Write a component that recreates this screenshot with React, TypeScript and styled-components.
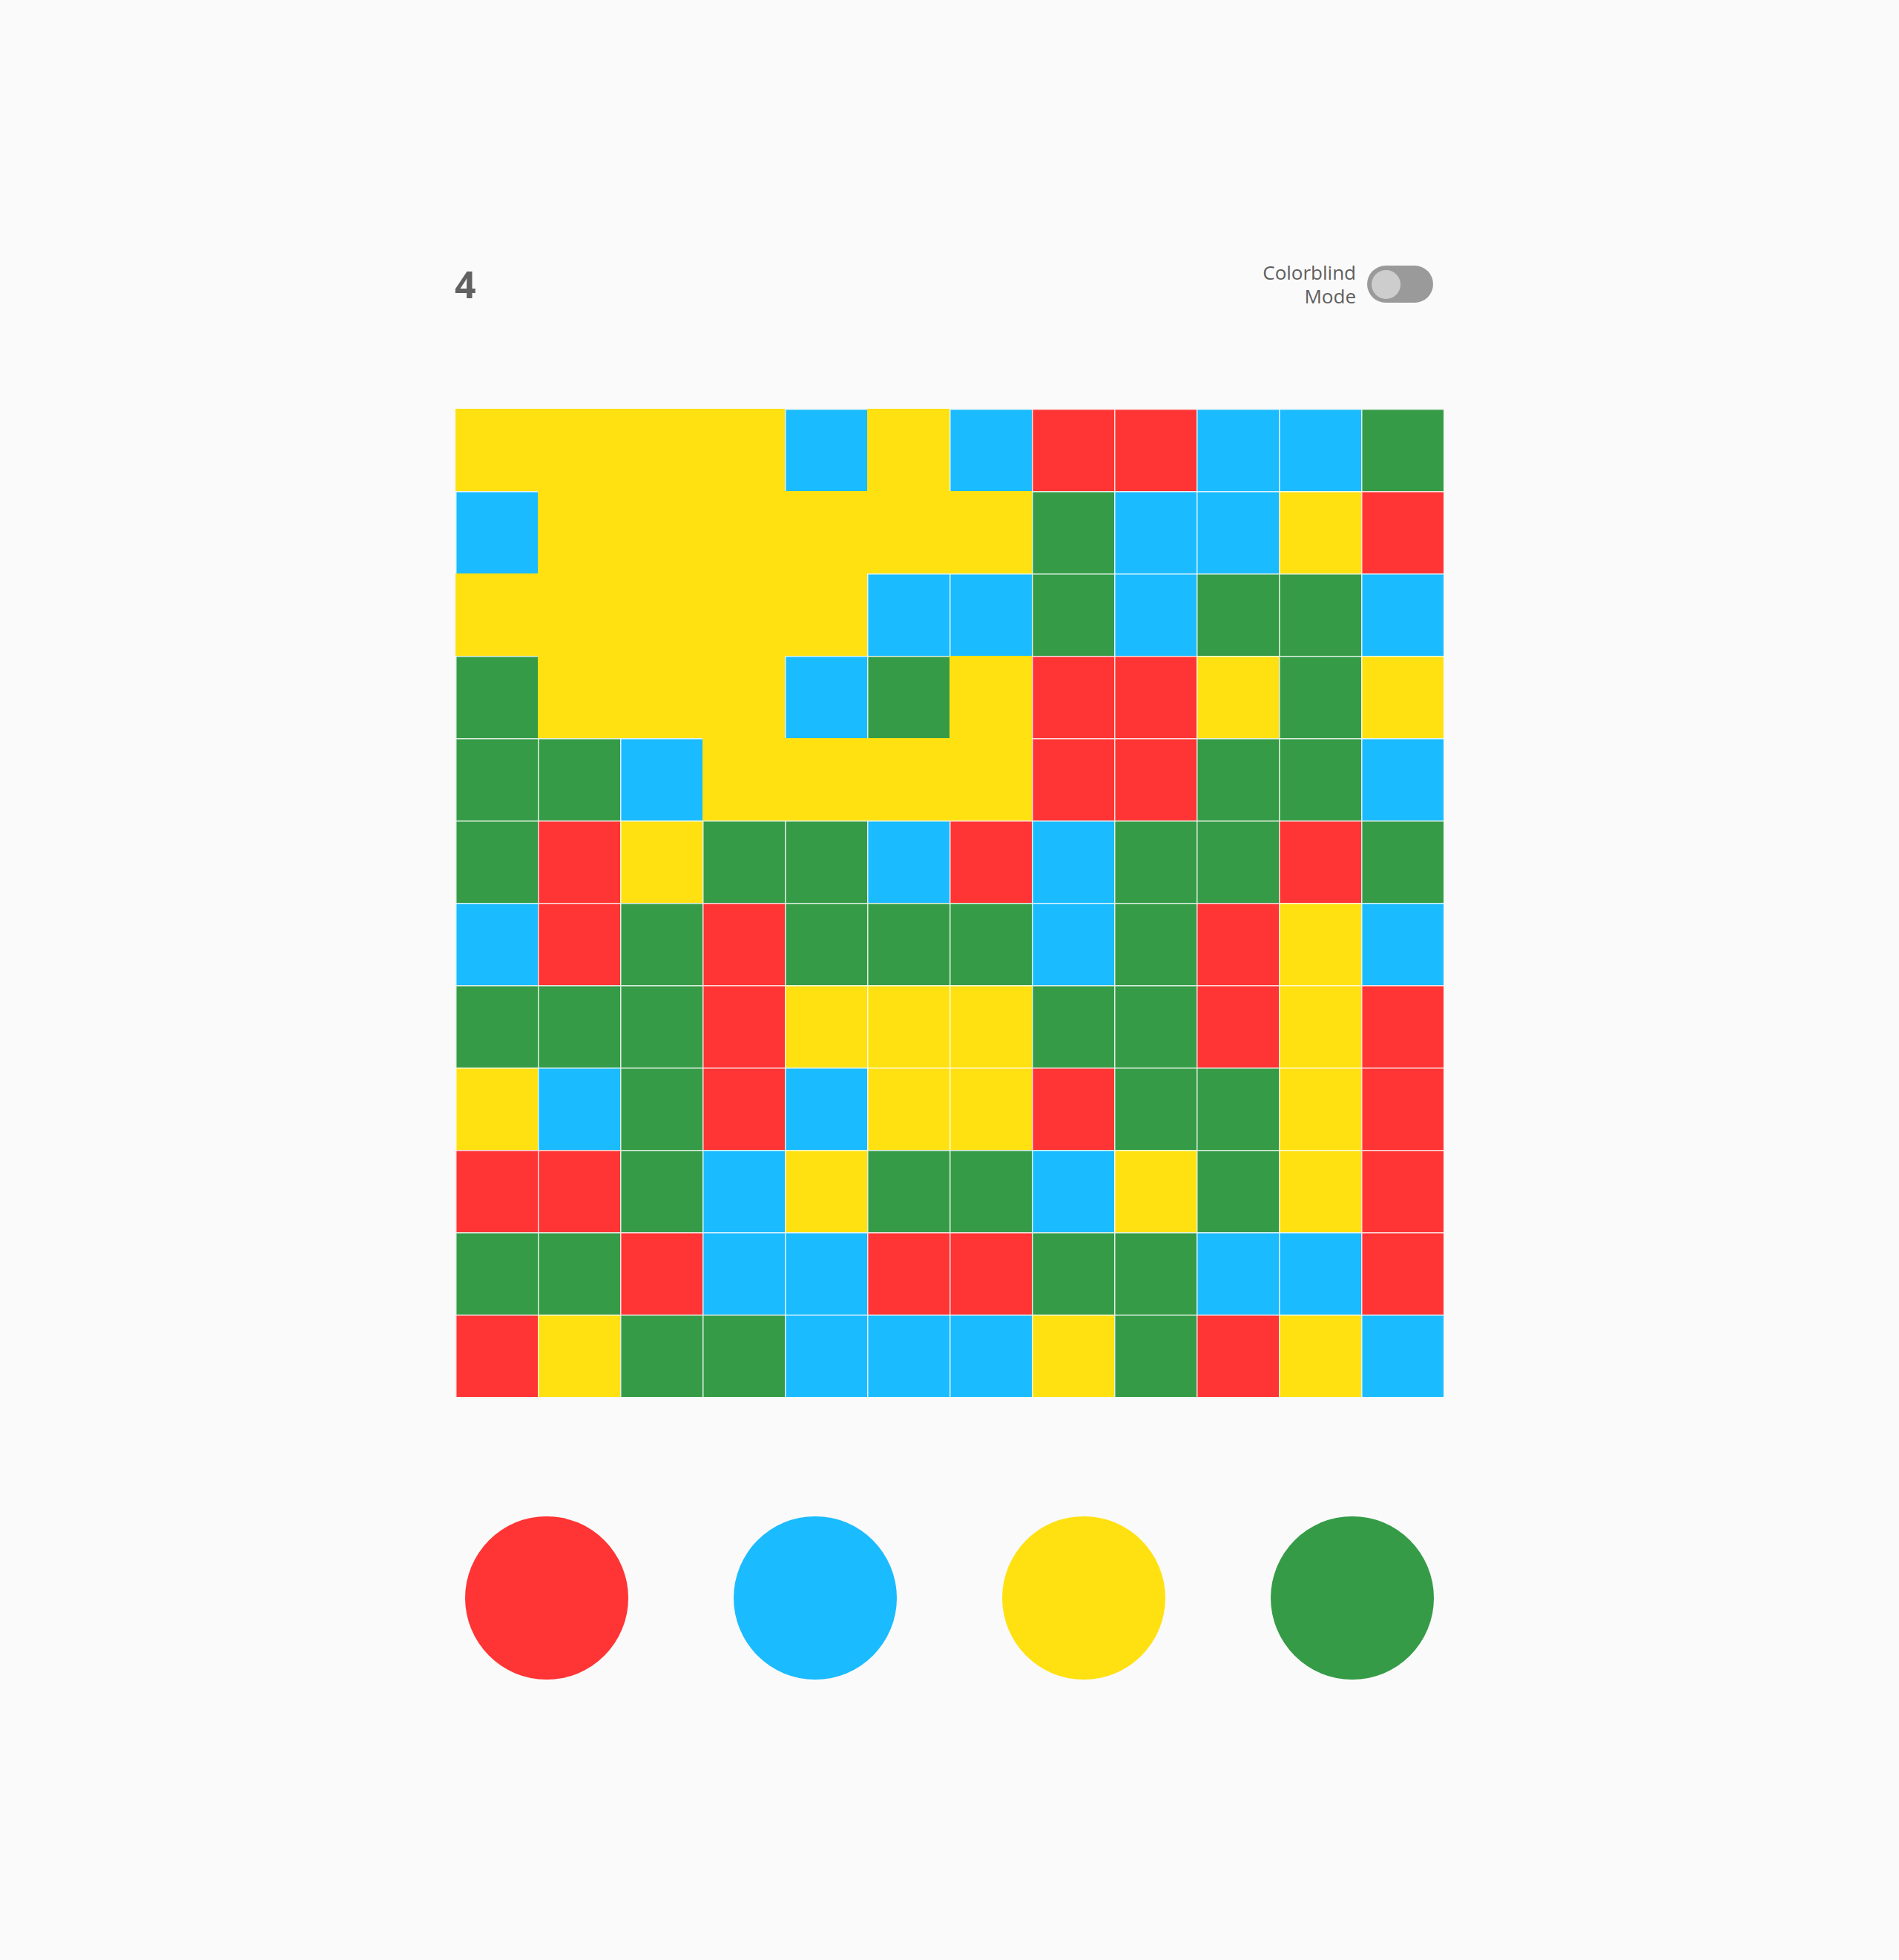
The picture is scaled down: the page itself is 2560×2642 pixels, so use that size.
import React from "react";
import styled, { createGlobalStyle } from "styled-components";

const GlobalStyle = createGlobalStyle`
  html, body {
    margin: 0;
    padding: 0;
    background: #fafafa;
  }
  body {
    font-family: "Open Sans", "Noto Sans", sans-serif;
  }
`;

const COLORS: Record<string, string> = {
  R: "#ff3434",
  B: "#1bbbff",
  Y: "#ffe111",
  G: "#359b47",
};

const BOARD = [
  "YYYYBYBRRBBG",
  "BYYYYYYGBBYR",
  "YYYYYBBGBGGB",
  "GYYYBGYRRYGY",
  "GGBYYYYRRGGB",
  "GRYGGBRBGGRG",
  "BRGRGGGBGRYB",
  "GGGRYYYGGRYR",
  "YBGRBYYRGGYR",
  "RRGBYGGBYGYR",
  "GGRBBRRGGBBR",
  "RYGGBBBYGRYB",
];

function computeFlood(board: string[]): boolean[][] {
  const n = board.length;
  const seen = board.map((r) => r.split("").map(() => false));
  const c = board[0][0];
  const stack: [number, number][] = [[0, 0]];
  while (stack.length) {
    const [r, k] = stack.pop()!;
    if (r < 0 || k < 0 || r >= n || k >= n) continue;
    if (seen[r][k] || board[r][k] !== c) continue;
    seen[r][k] = true;
    stack.push([r + 1, k], [r - 1, k], [r, k + 1], [r, k - 1]);
  }
  return seen;
}

const Page = styled.main`
  width: 1332px;
  margin: 0 auto;
  padding-top: 351px;
  min-height: 2642px;
  box-sizing: border-box;
`;

const Header = styled.header`
  display: flex;
  align-items: center;
  justify-content: space-between;
  height: 64px;
  padding-right: 14px;
`;

const Moves = styled.div`
  font-family: "Open Sans", "Noto Sans", sans-serif;
  font-weight: 700;
  font-size: 50px;
  line-height: 64px;
  color: #616161;
  margin-left: -1px;
`;

const ToggleGroup = styled.label`
  display: flex;
  align-items: center;
  gap: 15px;
`;

const ToggleLabel = styled.span`
  font-family: "Open Sans", "Noto Sans", sans-serif;
  font-size: 26px;
  line-height: 32px;
  color: #5e5e5e;
  text-align: right;
`;

const Track = styled.span`
  display: flex;
  align-items: center;
  width: 89px;
  height: 50px;
  border-radius: 25px;
  background: #9a9a9a;
  padding: 0 6px;
  box-sizing: border-box;
`;

const Knob = styled.span`
  width: 39px;
  height: 39px;
  border-radius: 50%;
  background: #cdcdcd;
`;

const Board = styled.div`
  display: grid;
  grid-template-columns: repeat(12, 111px);
  grid-auto-rows: 111px;
  margin-top: 136px;
`;

const Cell = styled.div<{ $color: string; $flooded: boolean }>`
  background: ${(p) => p.$color};
  box-shadow: ${(p) =>
    p.$flooded ? "none" : "inset 1.5px 1.5px 0 rgba(255, 255, 255, 0.85)"};
`;

const Palette = styled.div`
  display: flex;
  justify-content: space-between;
  padding: 0 13px;
  margin-top: 161px;
`;

const Swatch = styled.button<{ $color: string }>`
  width: 220px;
  height: 220px;
  border-radius: 50%;
  border: none;
  padding: 0;
  background: ${(p) => p.$color};
  cursor: pointer;
`;

export default function App() {
  const flood = computeFlood(BOARD);
  return (
    <>
      <GlobalStyle />
      <Page>
        <Header>
          <Moves>4</Moves>
          <ToggleGroup>
            <ToggleLabel>
              Colorblind
              <br />
              Mode
            </ToggleLabel>
            <Track>
              <Knob />
            </Track>
          </ToggleGroup>
        </Header>
        <Board>
          {BOARD.map((row, r) =>
            row
              .split("")
              .map((ch, c) => (
                <Cell key={`${r}-${c}`} $color={COLORS[ch]} $flooded={flood[r][c]} />
              ))
          )}
        </Board>
        <Palette>
          {["R", "B", "Y", "G"].map((k) => (
            <Swatch key={k} $color={COLORS[k]} aria-label={k} />
          ))}
        </Palette>
      </Page>
    </>
  );
}
